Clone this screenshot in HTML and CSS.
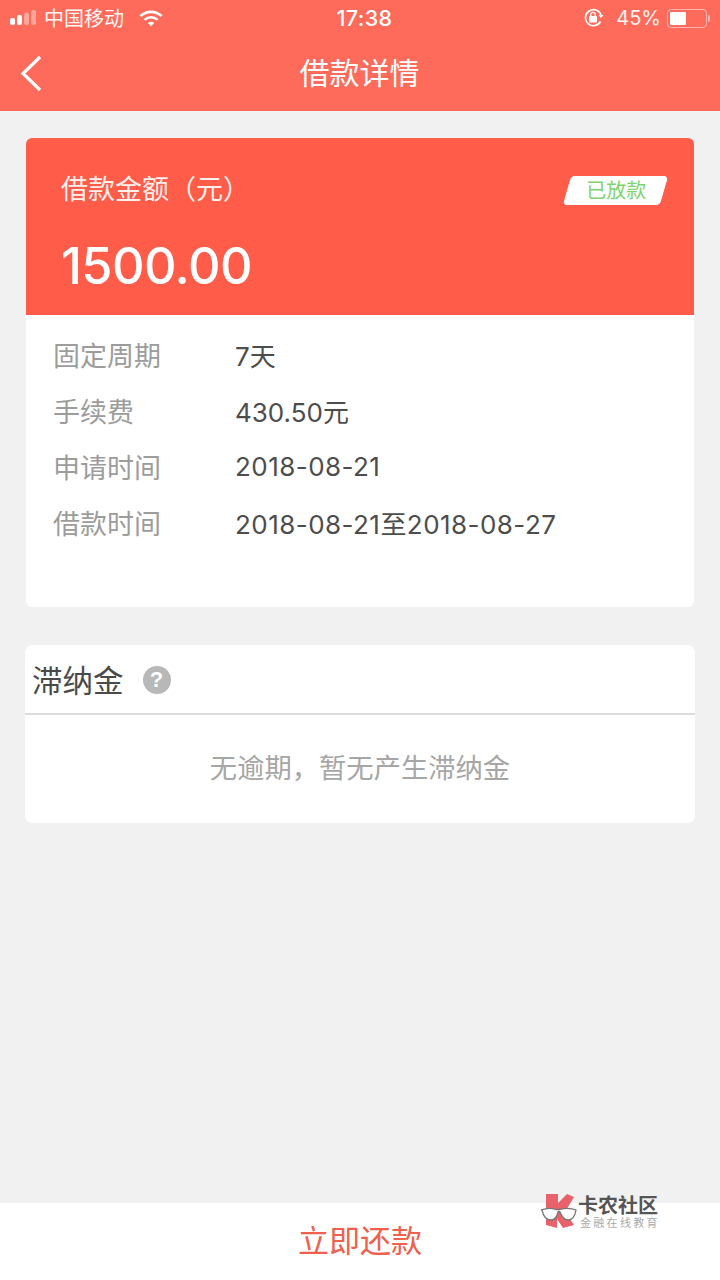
FILE: index.html
```html
<!DOCTYPE html>
<html lang="zh-CN">
<head>
<meta charset="utf-8">
<title>借款详情</title>
<link rel="stylesheet" href="styles.css">
</head>
<body>
<div class="page">
  <header class="header">
    <div class="status">
      <div class="status-side">
        <svg class="signal" width="28" height="18" viewBox="0 0 28 18"><rect x="0" y="9" width="5" height="7" rx="2" fill="#fff"/><rect x="7" y="6" width="5" height="10" rx="2" fill="#fff"/><rect x="14" y="3.500" width="5" height="12.500" rx="2" fill="#fff" fill-opacity=".4"/><rect x="21" y="1" width="5" height="15" rx="2" fill="#fff" fill-opacity=".4"/></svg>
        <span class="carrier">中国移动</span>
        <svg class="wifi" width="24" height="17" viewBox="0 0 26 18"><path d="M1.500 6.500a16.500 16.500 0 0 1 23 0" fill="none" stroke="#fff" stroke-width="2.800"/><path d="M6 10.500a10 10 0 0 1 14 0" fill="none" stroke="#fff" stroke-width="2.800"/><path d="M9.500 14a5 5 0 0 1 7 0L13 17.500z" fill="#fff"/></svg>
      </div>
      <div class="time">17:38</div>
      <div class="status-side status-right">
        <svg class="lock" width="22" height="20" viewBox="0 0 22 20"><path d="M17.500 13.500A8 8 0 1 1 18 7" fill="none" stroke="#fff" stroke-width="1.600"/><path d="M15.500 7h5l-2.500 3z" fill="#fff"/><rect x="6" y="8" width="8" height="6.500" rx="1" fill="#fff"/><path d="M7.800 8V6.500a2.200 2.200 0 0 1 4.400 0V8" fill="none" stroke="#fff" stroke-width="1.300"/></svg>
        <span class="percent">45%</span>
        <div class="battery"><div class="battery-fill"></div></div>
        <div class="battery-tip"></div>
      </div>
    </div>
    <div class="nav">
      <svg class="back" width="26" height="38" viewBox="0 0 26 38"><path d="M22 3L5 19.500 22 36" fill="none" stroke="#fff" stroke-width="3.200"/></svg>
      <h1 class="title">借款详情</h1>
    </div>
  </header>

  <main class="content">
    <section class="loan-card">
      <div class="loan-top">
        <div class="loan-label-row">
          <span class="loan-label">借款金额（元）</span>
          <span class="tag"><span class="tag-text">已放款</span></span>
        </div>
        <div class="amount">1500.00</div>
      </div>
      <dl class="details">
        <div class="row"><dt>固定周期</dt><dd>7天</dd></div>
        <div class="row"><dt>手续费</dt><dd>430.50元</dd></div>
        <div class="row"><dt>申请时间</dt><dd class="date">2018-08-21</dd></div>
        <div class="row"><dt>借款时间</dt><dd class="date">2018-08-21至2018-08-27</dd></div>
      </dl>
    </section>

    <section class="fee-card">
      <div class="fee-head">
        <span class="fee-title">滞纳金</span>
        <span class="help">?</span>
      </div>
      <div class="fee-body">无逾期，暂无产生滞纳金</div>
    </section>
  </main>

  <footer class="footer">立即还款</footer>

  <div class="watermark">
    <svg class="wm-logo" width="38" height="38" viewBox="0 0 38 38">
      <path d="M6 2h12v9l9-9 7 3-9 15 9 13-11 3-6-9v9L6 33z" fill="#e8626c"/>
      <path d="M1 18c5-2 11-2 15-.5h4c5-1.500 11-1.500 16 .5-1 6-4 10-8 10-3.500 0-6-3-8-8-.5-.5-1.500-.5-2 0-1 5-3.500 8-7 8-5 0-8-5-9-10z" fill="#fff" stroke="#777" stroke-width="1.300"/>
    </svg>
    <div class="wm-text">
      <div class="wm-name">卡农社区</div>
      <div class="wm-sub">金融在线教育</div>
    </div>
  </div>
</div>
</body>
</html>
```

FILE: styles.css
```css
* { box-sizing: border-box; margin: 0; padding: 0; }
html, body { width: 720px; height: 1280px; overflow: hidden; }
body { font-family: "Noto Sans CJK SC", "Liberation Sans", sans-serif; background: #f1f1f1; }
.page { position: relative; width: 720px; height: 1280px; display: flex; flex-direction: column; }

.header { height: 111px; background: #ff6b5b; color: #fff; flex: none; }
.status { height: 38px; display: flex; align-items: center; justify-content: space-between; padding: 0 10px 2px 10px; position: relative; }
.status-side { display: flex; align-items: center; }
.signal { margin-right: 6px; }
.carrier { font-size: 20px; line-height: 26px; color: #fff6f4; margin-right: 15px; }
.time { position: absolute; left: 0; right: 0; text-align: center; font-family: "Inter", "Liberation Sans", sans-serif; font-size: 21.500px; font-weight: 500; letter-spacing: .4px; padding-left: 9px; }
.status-right { gap: 0; }
.lock { margin-right: 11px; }
.percent { font-family: "Inter", "Liberation Sans", sans-serif; font-size: 20px; margin-right: 6px; color: #fff2f0; }
.battery { width: 40px; height: 19px; border: 1.500px solid rgba(255,255,255,.5); border-radius: 4px; padding: 2px; }
.battery-fill { width: 16px; height: 100%; background: #fff; border-radius: 1px; }
.battery-tip { width: 2px; height: 7px; background: rgba(255,255,255,.5); margin-left: 1px; border-radius: 0 2px 2px 0; }

.nav { position: relative; height: 73px; display: flex; align-items: center; justify-content: center; padding-bottom: 8px; }
.back { position: absolute; left: 18px; top: 16px; }
.title { font-size: 30px; font-weight: 400; line-height: 40px; color: #fff; padding-right: 1px; }

.content { flex: 1; padding: 27px 25px 0 25px; display: flex; flex-direction: column; }
.loan-card { margin: 0 1px; height: 469px; background: #fff; border-radius: 6px; overflow: hidden; }
.loan-top { height: 177px; background: #ff5c4a; padding: 31px 30px 0 35px; color: #fff; }
.loan-label-row { display: flex; align-items: center; justify-content: space-between; height: 38px; }
.loan-label { font-size: 27px; line-height: 38px; color: #fff0ec; }
.tag { width: 97px; height: 29px; background: #fff; border-radius: 4px; transform: skewX(-16deg); display: flex; align-items: center; justify-content: center; margin-top: 5px; }
.tag-text { font-size: 20px; color: #7ed36b; transform: skewX(16deg); margin-bottom: 2px; }
.amount { font-family: "Inter", "Liberation Sans", sans-serif; font-size: 50.500px; font-weight: 500; line-height: 60px; margin-top: 29px; letter-spacing: -.6px; }

.details { padding: 11px 27px 0 27px; }
.row { display: flex; height: 56px; align-items: center; font-size: 26px; }
.row dt { width: 182px; font-size: 27px; color: #9c9c9c; }
.row dd { color: #4d4d4d; font-family: "Inter", "Noto Sans CJK SC", sans-serif; }
.row .date { letter-spacing: .45px; }

.fee-card { margin-top: 38px; height: 178px; width: 670px; background: #fff; border-radius: 8px; overflow: hidden; }
.fee-head { height: 70px; display: flex; align-items: center; padding: 0 7px; border-bottom: 2px solid #dcdcdc; }
.fee-title { font-size: 30.500px; line-height: 40px; color: #4a4a4a; }
.help { width: 28px; height: 28px; border-radius: 50%; background: #b8b8b8; color: #fff; font-family: "Liberation Sans", sans-serif; font-weight: 700; font-size: 22px; display: flex; align-items: center; justify-content: center; margin: 2px 0 0 19px; }
.fee-body { height: 108px; display: flex; align-items: center; justify-content: center; font-size: 27.300px; color: #a6a6a6; padding-bottom: 6px; }

.footer { flex: none; height: 77px; background: #fff; text-align: center; font-size: 31px; line-height: 72px; color: #f0604e; }

.watermark { position: absolute; left: 540px; top: 1192px; display: flex; align-items: flex-start; }
.wm-text { padding-top: 3px; font-family: "Liberation Sans", "Noto Sans CJK SC", sans-serif; }
.wm-name { font-size: 20px; line-height: 22px; font-weight: 700; color: #555; }
.wm-sub { font-size: 11px; line-height: 14px; margin-top: -1px; padding-left: 2px; color: #aaa; letter-spacing: 2.300px; }
```
